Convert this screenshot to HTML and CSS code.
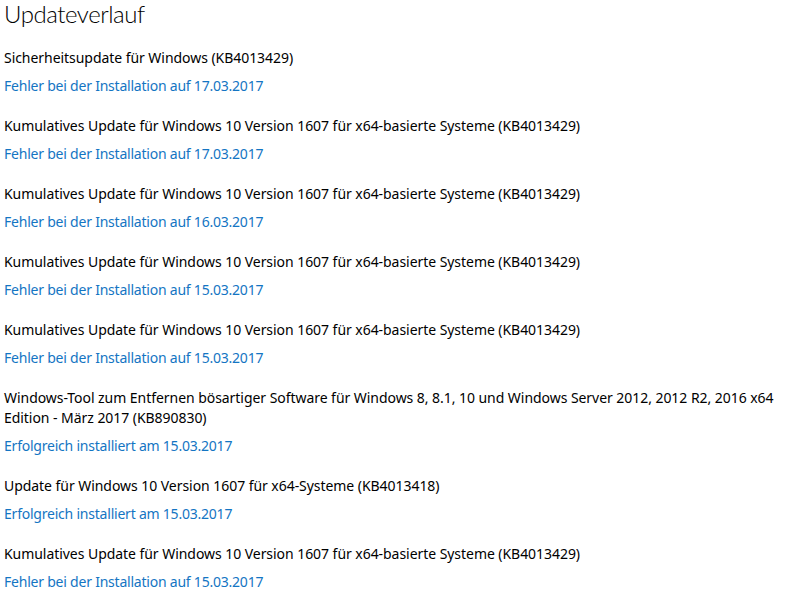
FILE: index.html
```html
<!DOCTYPE html>
<html lang="de">
<head>
<meta charset="utf-8">
<title>Updateverlauf</title>
<link rel="stylesheet" href="styles.css">
</head>
<body>
<main class="page">
  <h1 class="page-title">Updateverlauf</h1>
  <ul class="history">
    <li class="entry">
      <div class="entry-name">Sicherheitsupdate für Windows (KB4013429)</div>
      <a class="entry-status" href="#">Fehler bei der Installation auf 17.03.2017</a>
    </li>
    <li class="entry">
      <div class="entry-name">Kumulatives Update für Windows 10 Version 1607 für x64-basierte Systeme (KB4013429)</div>
      <a class="entry-status" href="#">Fehler bei der Installation auf 17.03.2017</a>
    </li>
    <li class="entry">
      <div class="entry-name">Kumulatives Update für Windows 10 Version 1607 für x64-basierte Systeme (KB4013429)</div>
      <a class="entry-status" href="#">Fehler bei der Installation auf 16.03.2017</a>
    </li>
    <li class="entry">
      <div class="entry-name">Kumulatives Update für Windows 10 Version 1607 für x64-basierte Systeme (KB4013429)</div>
      <a class="entry-status" href="#">Fehler bei der Installation auf 15.03.2017</a>
    </li>
    <li class="entry">
      <div class="entry-name">Kumulatives Update für Windows 10 Version 1607 für x64-basierte Systeme (KB4013429)</div>
      <a class="entry-status" href="#">Fehler bei der Installation auf 15.03.2017</a>
    </li>
    <li class="entry">
      <div class="entry-name entry-name-wide">Windows-Tool zum Entfernen bösartiger Software für Windows 8, 8.1, 10 und Windows Server 2012, 2012 R2, 2016 x64 Edition - März 2017 (KB890830)</div>
      <a class="entry-status" href="#">Erfolgreich installiert am 15.03.2017</a>
    </li>
    <li class="entry">
      <div class="entry-name">Update für Windows 10 Version 1607 für x64-Systeme (KB4013418)</div>
      <a class="entry-status" href="#">Erfolgreich installiert am 15.03.2017</a>
    </li>
    <li class="entry">
      <div class="entry-name">Kumulatives Update für Windows 10 Version 1607 für x64-basierte Systeme (KB4013429)</div>
      <a class="entry-status" href="#">Fehler bei der Installation auf 15.03.2017</a>
    </li>
  </ul>
</main>
</body>
</html>
```

FILE: styles.css
```css
html, body {
  margin: 0;
  padding: 0;
  background: #ffffff;
}

body {
  font-family: "Noto Sans", "Open Sans", "DejaVu Sans", sans-serif;
  color: #000000;
  overflow: hidden;
}

.page {
  padding: 0 0 0 4px;
  width: 780px;
}

.page-title {
  margin: 0 0 21px 0;
  font-family: "Lato", "Open Sans", sans-serif;
  font-weight: 300;
  font-size: 24px;
  line-height: 27px;
  letter-spacing: -0.45px;
  color: #000000;
}

.history {
  list-style: none;
  margin: 0;
  padding: 0;
  display: flex;
  flex-direction: column;
  gap: 20px;
}

.entry {
  display: flex;
  flex-direction: column;
  align-items: flex-start;
  gap: 8px;
}

.entry-name {
  font-size: 14px;
  line-height: 20px;
  letter-spacing: -0.05px;
  color: #000000;
}

.entry-status {
  font-size: 14px;
  line-height: 20px;
  letter-spacing: -0.22px;
  color: #1475c3;
  text-decoration: none;
}
```
